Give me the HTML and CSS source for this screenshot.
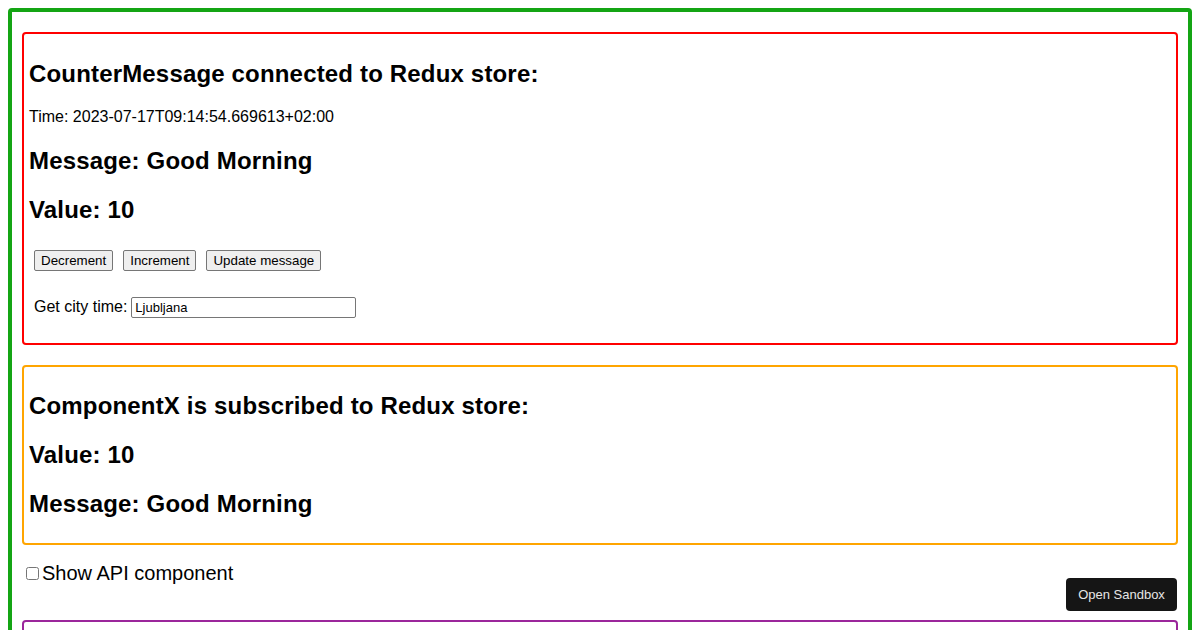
FILE: index.html
```html
<!DOCTYPE html>
<html>
<head>
<meta charset="utf-8">
<link rel="stylesheet" href="styles.css">
</head>
<body>
<div class="app">
  <div class="box box-red">
    <h2>CounterMessage connected to Redux store:</h2>
    <p class="time">Time: 2023-07-17T09:14:54.669613+02:00</p>
    <h2>Message: Good Morning</h2>
    <h2>Value: 10</h2>
    <div class="controls">
      <button class="btn">Decrement</button>
      <button class="btn">Increment</button>
      <button class="btn">Update message</button>
    </div>
    <div class="city">
      <label class="city-label" for="city">Get city time:</label>
      <input id="city" class="city-input" type="text" value="Ljubljana">
    </div>
  </div>
  <div class="box box-orange">
    <h2>ComponentX is subscribed to Redux store:</h2>
    <h2>Value: 10</h2>
    <h2>Message: Good Morning</h2>
  </div>
  <div class="toggle"><input id="api" class="toggle-box" type="checkbox"><label for="api">Show API component</label></div>
  <div class="box box-purple"></div>
</div>
<a class="sandbox-btn">Open Sandbox</a>
</body>
</html>
```
FILE: styles.css
```css
html {
  overflow: hidden;
}
body {
  margin: 8px;
  font-family: "Liberation Sans", Arial, sans-serif;
  color: #000;
  background: #fff;
}
.app {
  border: 4px solid #14a514;
  border-radius: 4px;
  padding: 0 10px;
  min-height: 700px;
}
.box {
  border: 2px solid;
  border-radius: 4px;
  padding: 5px;
  margin: 20px 0;
}
.box-red { border-color: #ff0000; }
.box-orange { border-color: #ffa500; }
.box-purple { border-color: #9b269b; margin-top: 0; min-height: 80px; }
h2 {
  font-size: 24px;
  font-weight: bold;
  line-height: 29px;
  letter-spacing: 0.17px;
  margin: 19.92px 0;
}
.time {
  font-size: 16px;
  margin: 16px 0;
}
.controls {
  display: flex;
  gap: 10px;
  padding: 6px 5px 4px;
}
.btn {
  font-family: "Liberation Sans", Arial, sans-serif;
  font-size: 13.333px;
  height: 21px;
  padding: 1px 6px;
  background: #efefef;
  border: 1px solid #767676;
  border-radius: 2px;
  color: #000;
}
.city {
  display: flex;
  align-items: center;
  gap: 4px;
  padding: 6px 5px 4px;
  margin: 16px 0;
}
.city-label {
  font-size: 16px;
}
.city-input {
  width: 225px;
  height: 21px;
  box-sizing: border-box;
  padding: 1px 3px;
  font-family: "Liberation Sans", Arial, sans-serif;
  font-size: 13px;
  border: 1px solid #767676;
  border-radius: 2px;
}
.toggle {
  display: flex;
  align-items: center;
  font-size: 20px;
  line-height: 17px;
  height: 17px;
  margin: 0 0 38px;
}
.toggle-box {
  margin: 0 3px 0 4px;
  width: 13px;
  height: 13px;
}
.sandbox-btn {
  position: fixed;
  right: 23px;
  bottom: 19px;
  width: 111px;
  height: 33px;
  box-sizing: border-box;
  display: flex;
  align-items: center;
  justify-content: center;
  background: #151515;
  color: #e6e6e6;
  border-radius: 4px;
  font-size: 13px;
  font-family: "Liberation Sans", Arial, sans-serif;
}
```
